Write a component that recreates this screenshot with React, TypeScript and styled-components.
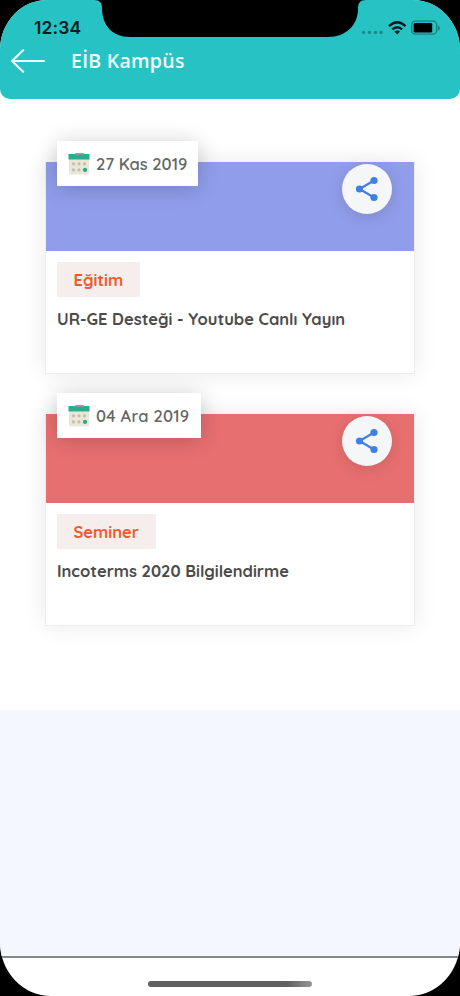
import React from "react";
import styled, { createGlobalStyle } from "styled-components";

const GlobalStyle = createGlobalStyle`
  *, *::before, *::after { box-sizing: border-box; }
  body { margin: 0; background: #000; }
`;

const Screen = styled.div`
  position: relative;
  display: flex;
  flex-direction: column;
  width: 460px;
  height: 996px;
  overflow: hidden;
  background: #fff;
  border-radius: 47px 47px 51px 51px / 50px 50px 54px 54px;
  font-family: Quicksand, Lato, sans-serif;
`;

const Header = styled.header`
  flex: none;
  height: 99px;
  background: #27c3c4;
  border-radius: 0 0 10px 10px;
`;

const StatusBar = styled.div`
  display: flex;
  justify-content: space-between;
  height: 42px;
  padding: 18px 19px 0 34px;
`;

const Clock = styled.span`
  font: 600 17.5px/20px Inter, sans-serif;
  letter-spacing: 0.1px;
  color: #06201f;
`;

const Notch = styled.svg`
  position: absolute;
  top: 0;
  left: 94px;
`;

const StatusIcons = styled.svg`
  display: block;
`;

const NavBar = styled.div`
  display: flex;
  align-items: center;
  height: 38px;
  padding-left: 10px;
`;

const BackButton = styled.button`
  display: flex;
  width: 36px;
  height: 26px;
  padding: 0;
  border: 0;
  background: none;
`;

const Title = styled.h1`
  margin: 0 0 0 25px;
  font: 600 19.5px/26px "Open Sans", sans-serif;
  letter-spacing: 0.25px;
  color: #effffc;
`;

const CardList = styled.main`
  display: flex;
  flex-direction: column;
  gap: 40px;
  flex: none;
  height: 611px;
  padding: 63px 45px 0;
`;

const Card = styled.article`
  position: relative;
  flex: none;
  height: 212px;
  border: 1px solid #ededed;
  border-top: 0;
  background: #fff;
  box-shadow: 0 0 22px rgba(0, 0, 0, 0.09);
`;

const Banner = styled.div<{ $color: string }>`
  display: flex;
  justify-content: flex-end;
  height: 89px;
  padding: 2px 22px 0 0;
  background: ${(p) => p.$color};
`;

const ShareButton = styled.button`
  display: flex;
  align-items: center;
  justify-content: center;
  width: 50px;
  height: 50px;
  padding: 0;
  border: 0;
  border-radius: 50%;
  background: #f5f6f7;
  box-shadow: 0 3px 16px rgba(0, 0, 0, 0.12);
`;

const DateBadge = styled.div<{ $width: number }>`
  position: absolute;
  top: -21px;
  left: 11px;
  display: flex;
  align-items: center;
  gap: 6px;
  width: ${(p) => p.$width}px;
  height: 45px;
  padding-left: 11px;
  background: #fff;
  box-shadow: 0 2px 22px rgba(0, 0, 0, 0.2);
`;

const DateText = styled.time<{ $spacing: number }>`
  font-size: 16.5px;
  font-weight: 600;
  line-height: 24px;
  letter-spacing: ${(p) => p.$spacing}px;
  white-space: nowrap;
  color: #626665;
`;

const Details = styled.div`
  display: flex;
  flex-direction: column;
  align-items: flex-start;
  padding: 11px 11px 0;
`;

const Tag = styled.span<{ $width: number; $spacing: number }>`
  width: ${(p) => p.$width}px;
  height: 35px;
  padding-left: 16.5px;
  background: #f6eeec;
  font-size: 16.5px;
  font-weight: 700;
  line-height: 35px;
  letter-spacing: ${(p) => p.$spacing}px;
  color: #f1592f;
`;

const CardTitle = styled.h2`
  margin: 9px 0 0;
  font-size: 16.5px;
  font-weight: 700;
  line-height: 26px;
  white-space: nowrap;
  color: #4b4b4c;
`;

const Backdrop = styled.div`
  flex: 1;
  background: #f4f7fe;
  border-bottom: 2px solid #858789;
`;

const HomeArea = styled.footer`
  display: flex;
  justify-content: center;
  flex: none;
  height: 38px;
  padding-top: 23px;
`;

const HomeIndicator = styled.div`
  width: 164px;
  height: 6px;
  border-radius: 3px;
  background: linear-gradient(90deg, #606060 0 85%, #969696);
`;

const CalendarIcon = () => (
  <svg width="22" height="22" viewBox="0 0 22 22">
    <path d="M1 5H21V20Q21 21.5 19.5 21.5H2.5Q1 21.5 1 20Z" fill="#ebe7d8" />
    <path d="M.5 1H21.5V6.5H.5Z" fill="#27ae91" />
    <rect x="7" y="0" width="9" height="2" rx="1" fill="#899f9f" />
    <g fill="#c4bda9">
      <circle cx="5.5" cy="10.8" r="1.6" />
      <circle cx="11" cy="10.8" r="1.6" />
      <circle cx="16.5" cy="10.8" r="1.6" />
      <circle cx="5.5" cy="16.9" r="1.6" />
      <circle cx="11" cy="16.9" r="1.6" />
    </g>
    <circle cx="17" cy="16.9" r="2.1" fill="#22ae83" />
  </svg>
);

const ShareIcon = () => (
  <svg width="24" height="26" viewBox="0 0 24 26" fill="#3f7fe8">
    <path d="M19 4.5 4.5 13 19 21.5" fill="none" stroke="#3f7fe8" strokeWidth="2.2" />
    <circle cx="4.5" cy="13" r="3.6" />
    <circle cx="19" cy="4.5" r="3.6" />
    <circle cx="19" cy="21.5" r="3.6" />
  </svg>
);

const events = [
  { date: "27 Kas 2019", dateSpacing: 0, badge: 141, color: "#909de9", tag: "Eğitim", tagWidth: 83, tagSpacing: 0, title: "UR-GE Desteği - Youtube Canlı Yayın" },
  { date: "04 Ara 2019", dateSpacing: 0.2, badge: 144, color: "#e86f70", tag: "Seminer", tagWidth: 99, tagSpacing: 0, title: "Incoterms 2020 Bilgilendirme" },
];

export default function App() {
  return (
    <>
      <GlobalStyle />
      <Screen>
        <Header>
          <Notch width="272" height="37" viewBox="0 0 272 37">
            <path d="M0 0C6 0 8 3 8 8C8 25 18 37 36 37H234C252 37 264 25 264 9C264 3 266 0 272 0Z" fill="#000" />
          </Notch>
          <StatusBar>
            <Clock>12:34</Clock>
            <StatusIcons width="80" height="20" viewBox="0 0 80 20">
              <g fill="#168b8e">
                <circle cx="2.5" cy="14.5" r="1.7" />
                <circle cx="8.5" cy="14.5" r="1.7" />
                <circle cx="14.5" cy="14.5" r="1.7" />
                <circle cx="20" cy="14.5" r="1.7" />
              </g>
              <g fill="none" stroke="#031b1c" strokeWidth="2.4">
                <path d="M27.9 8.2Q36.2 .2 44.5 8.2" />
                <path d="M31.2 11.5Q36.2 6.8 41.2 11.5" />
              </g>
              <path d="M33.4 13.6Q36.2 11.2 39 13.6L36.2 16.5Z" fill="#031b1c" />
              <rect x="50.7" y="3.2" width="25" height="13" rx="3.7" fill="none" stroke="#178184" strokeWidth="1.3" />
              <rect x="52.7" y="5" width="18.5" height="9.5" rx="1.2" fill="#000" />
              <path d="M77 7.2Q81 10 77 12.8Z" fill="#178184" />
            </StatusIcons>
          </StatusBar>
          <NavBar>
            <BackButton aria-label="Back">
              <svg width="36" height="26" viewBox="0 0 36 26" fill="none" stroke="#effffc" strokeWidth="2.2" strokeLinecap="round" strokeLinejoin="round">
                <path d="M34 13H2M13.2 2.3 2 13l11.2 10.7" />
              </svg>
            </BackButton>
            <Title>EİB Kampüs</Title>
          </NavBar>
        </Header>
        <CardList>
          {events.map((event) => (
            <Card key={event.title}>
              <Banner $color={event.color}>
                <ShareButton aria-label="Share">
                  <ShareIcon />
                </ShareButton>
              </Banner>
              <DateBadge $width={event.badge}>
                <CalendarIcon />
                <DateText $spacing={event.dateSpacing}>{event.date}</DateText>
              </DateBadge>
              <Details>
                <Tag $width={event.tagWidth} $spacing={event.tagSpacing}>{event.tag}</Tag>
                <CardTitle>{event.title}</CardTitle>
              </Details>
            </Card>
          ))}
        </CardList>
        <Backdrop />
        <HomeArea>
          <HomeIndicator />
        </HomeArea>
      </Screen>
    </>
  );
}
